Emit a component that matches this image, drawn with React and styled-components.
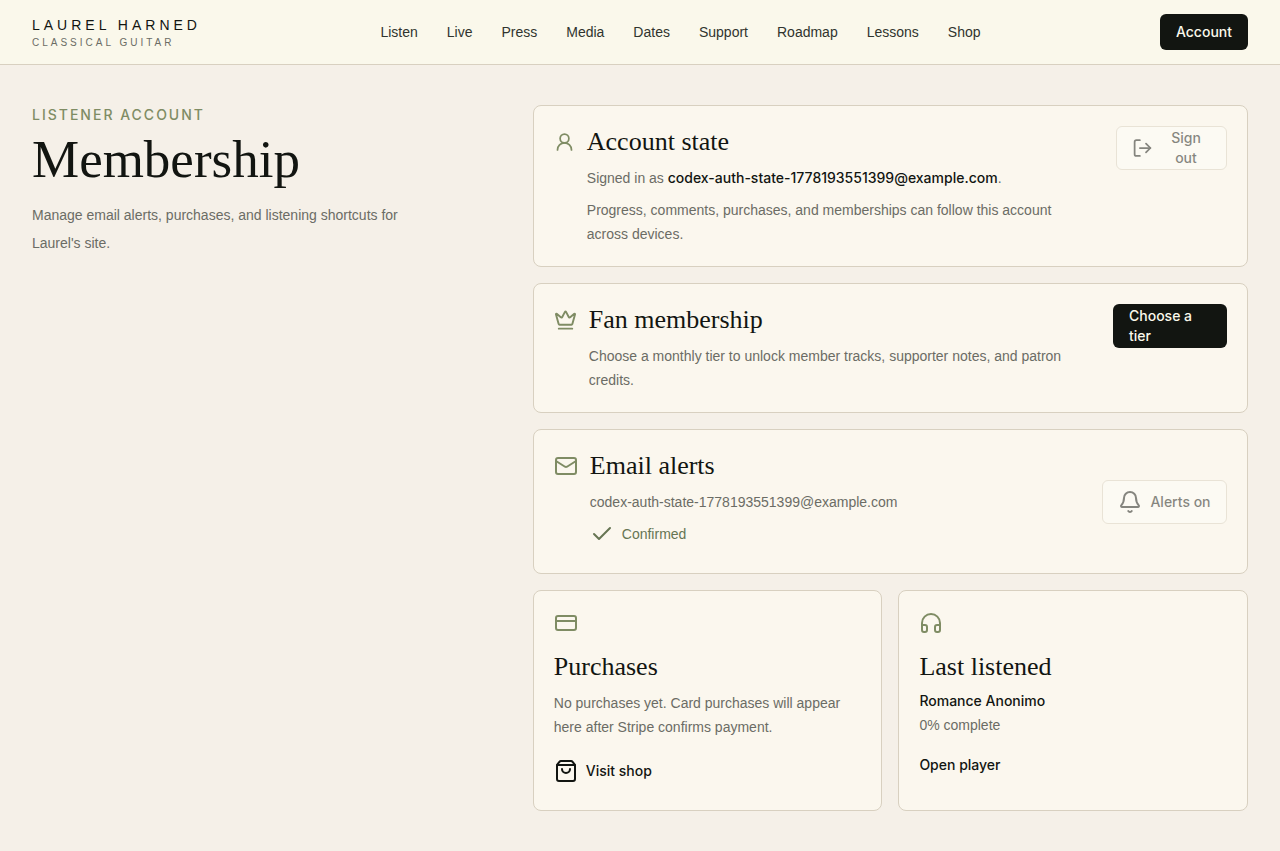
import React from "react";
import styled, { createGlobalStyle } from "styled-components";
import {
  UserRound,
  LogOut,
  Crown,
  Mail,
  Bell,
  Check,
  CreditCard,
  Headphones,
  ShoppingBag,
} from "lucide-react";

const color = {
  page: "#f5f0e8",
  header: "#faf8eb",
  card: "#fbf7ee",
  line: "#d8d0c0",
  ink: "#121511",
  nav: "#30342e",
  muted: "#6b6c65",
  sage: "#7f8c64",
  moss: "#667553",
};

const sans = '"Liberation Sans", Arial, sans-serif';
const sansMedium = '"Inter", "Liberation Sans", sans-serif';
const serif = '"Liberation Serif", serif';

const GlobalStyle = createGlobalStyle`
  *, *::before, *::after { box-sizing: border-box; }
  body {
    margin: 0;
    background: ${color.page};
    color: ${color.ink};
    font-family: ${sans};
    font-size: 14px;
    line-height: 24px;
  }
  h1, h2, p { margin: 0; font-weight: 400; }
  a { color: inherit; text-decoration: none; }
  button { font: inherit; margin: 0; cursor: pointer; }
`;

const Header = styled.header`
  display: flex;
  align-items: center;
  justify-content: space-between;
  height: 65px;
  padding: 0 32px;
  background: ${color.header};
  border-bottom: 1px solid ${color.line};
`;

const Brand = styled.a`
  display: flex;
  flex-direction: column;
  padding-top: 2px;
`;

const BrandName = styled.span`
  font-size: 14px;
  line-height: 20px;
  letter-spacing: 4px;
`;

const BrandRole = styled.span`
  font-size: 10px;
  line-height: 16px;
  letter-spacing: 3px;
  color: ${color.muted};
`;

const Nav = styled.nav`
  display: flex;
  gap: 29px;
  color: ${color.nav};
`;

const AccountLink = styled.a`
  padding: 8px 16px;
  border-radius: 6px;
  background: ${color.ink};
  color: ${color.header};
  font-family: ${sansMedium};
  font-weight: 500;
  line-height: 20px;
`;

const Main = styled.main`
  display: grid;
  grid-template-columns: 2fr 3fr;
  align-items: start;
  gap: 24px;
  padding: 40px 32px;
`;

const Eyebrow = styled.p`
  font-family: ${sansMedium};
  font-size: 14px;
  line-height: 20px;
  font-weight: 500;
  letter-spacing: 2px;
  color: ${color.sage};
`;

const PageTitle = styled.h1`
  margin-top: 10px;
  font-family: ${serif};
  font-size: 53px;
  line-height: 48px;
`;

const Intro = styled.p`
  max-width: 400px;
  margin-top: 18px;
  line-height: 28px;
  color: ${color.muted};
`;

const Stack = styled.div`
  display: grid;
  gap: 16px;
`;

const Card = styled.section`
  display: ${(p) => (p.$column ? "block" : "flex")};
  align-items: ${(p) => (p.$center ? "center" : "flex-start")};
  justify-content: space-between;
  gap: 16px;
  padding: 20px;
  border: 1px solid ${color.line};
  border-radius: 8px;
  background: ${color.card};
`;

const CardLead = styled.div`
  display: flex;
  align-items: flex-start;
  gap: 12px;
`;

const LeadIcon = styled.span`
  display: flex;
  flex: none;
  margin-top: 4px;
  color: ${color.sage};
`;

const TopIcon = styled.div`
  display: flex;
  margin-bottom: 16px;
  color: ${color.sage};
`;

const CardTitle = styled.h2`
  font-family: ${serif};
  font-size: 26px;
  line-height: 32px;
`;

const CardText = styled.p`
  max-width: 500px;
  margin-top: 8px;
  color: ${color.muted};

  strong {
    font-family: ${sansMedium};
    font-weight: 500;
    color: ${color.ink};
  }
`;

const Status = styled.p`
  display: flex;
  align-items: center;
  gap: 8px;
  margin: 8px 0 7px;
  color: ${color.moss};
`;

const GhostButton = styled.button`
  display: flex;
  flex: none;
  align-items: center;
  justify-content: center;
  gap: 8px;
  width: ${(p) => p.$width};
  height: 44px;
  padding: 0 15px;
  border: 1px solid ${color.line};
  border-radius: 6px;
  background: #fdfdf9;
  color: ${color.ink};
  font-family: ${sansMedium};
  font-weight: 500;
  line-height: 20px;
  opacity: 0.5;

  svg { flex: none; }
`;

const TierLink = styled.a`
  flex: none;
  width: 114px;
  padding: 2px 16px;
  border-radius: 6px;
  background: ${color.ink};
  color: ${color.header};
  font-family: ${sansMedium};
  font-weight: 500;
  line-height: 20px;
`;

const Pair = styled.div`
  display: grid;
  grid-template-columns: 1fr 1fr;
  gap: 16px;
`;

const Track = styled.p`
  margin-top: 8px;
  font-family: ${sansMedium};
  line-height: 20px;
  font-weight: 500;
`;

const Progress = styled.p`
  margin-top: 4px;
  line-height: 20px;
  color: ${color.muted};
`;

const CardLink = styled.a`
  display: flex;
  align-items: center;
  gap: 8px;
  width: fit-content;
  margin: 20px 0 7px;
  font-family: ${sansMedium};
  font-weight: 500;
  line-height: 20px;
`;

const navItems = [
  "Listen",
  "Live",
  "Press",
  "Media",
  "Dates",
  "Support",
  "Roadmap",
  "Lessons",
  "Shop",
];

const email = "codex-auth-state-1778193551399@example.com";

export default function App() {
  return (
    <>
      <GlobalStyle />
      <Header>
        <Brand href="#home">
          <BrandName>LAUREL HARNED</BrandName>
          <BrandRole>CLASSICAL GUITAR</BrandRole>
        </Brand>
        <Nav aria-label="Main">
          {navItems.map((item) => (
            <a key={item} href={`#${item.toLowerCase()}`}>
              {item}
            </a>
          ))}
        </Nav>
        <AccountLink href="#account">Account</AccountLink>
      </Header>

      <Main>
        <div>
          <Eyebrow>LISTENER ACCOUNT</Eyebrow>
          <PageTitle>Membership</PageTitle>
          <Intro>
            Manage email alerts, purchases, and listening shortcuts for
            Laurel's site.
          </Intro>
        </div>

        <Stack>
          <Card>
            <CardLead>
              <LeadIcon>
                <UserRound width={21} height={24} />
              </LeadIcon>
              <div>
                <CardTitle>Account state</CardTitle>
                <CardText>
                  Signed in as <strong>{email}</strong>.
                </CardText>
                <CardText>
                  Progress, comments, purchases, and memberships can follow
                  this account across devices.
                </CardText>
              </div>
            </CardLead>
            <GhostButton type="button" $width="111px">
              <LogOut width={21} height={24} />
              <span>Sign out</span>
            </GhostButton>
          </Card>

          <Card>
            <CardLead>
              <LeadIcon>
                <Crown width={23} height={24} />
              </LeadIcon>
              <div>
                <CardTitle>Fan membership</CardTitle>
                <CardText>
                  Choose a monthly tier to unlock member tracks, supporter
                  notes, and patron credits.
                </CardText>
              </div>
            </CardLead>
            <TierLink href="#support">Choose a tier</TierLink>
          </Card>

          <Card $center>
            <CardLead>
              <LeadIcon>
                <Mail />
              </LeadIcon>
              <div>
                <CardTitle>Email alerts</CardTitle>
                <CardText>{email}</CardText>
                <Status>
                  <Check />
                  Confirmed
                </Status>
              </div>
            </CardLead>
            <GhostButton type="button" $width="125px">
              <Bell />
              <span>Alerts on</span>
            </GhostButton>
          </Card>

          <Pair>
            <Card $column>
              <TopIcon>
                <CreditCard />
              </TopIcon>
              <CardTitle>Purchases</CardTitle>
              <CardText>
                No purchases yet. Card purchases will appear here after Stripe
                confirms payment.
              </CardText>
              <CardLink href="#shop">
                <ShoppingBag />
                Visit shop
              </CardLink>
            </Card>
            <Card $column>
              <TopIcon>
                <Headphones />
              </TopIcon>
              <CardTitle>Last listened</CardTitle>
              <Track>Romance Anonimo</Track>
              <Progress>0% complete</Progress>
              <CardLink href="#listen">Open player</CardLink>
            </Card>
          </Pair>
        </Stack>
      </Main>
    </>
  );
}
